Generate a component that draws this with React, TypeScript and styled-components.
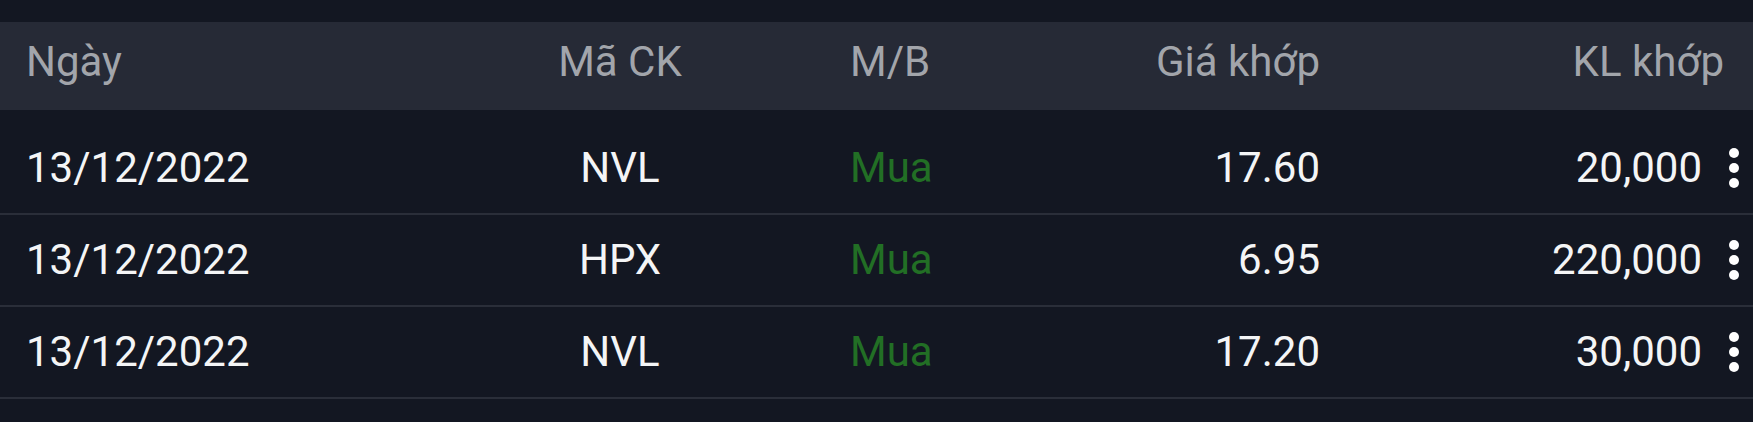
import React from 'react';
import styled, {createGlobalStyle} from 'styled-components';

interface Trade {
    date: string;
    code: string;
    side: string;
    price: string;
    volume: string;
}

const trades: Trade[] = [
    {date: '13/12/2022', code: 'NVL', side: 'Mua', price: '17.60', volume: '20,000'},
    {date: '13/12/2022', code: 'HPX', side: 'Mua', price: '6.95', volume: '220,000'},
    {date: '13/12/2022', code: 'NVL', side: 'Mua', price: '17.20', volume: '30,000'},
];

const MoreIcon: React.FC = () => (
    <svg width="10" height="40" viewBox="0 0 10 40">
        <circle cx="5" cy="5" r="5" fill="#ffffff" />
        <circle cx="5" cy="20" r="5" fill="#ffffff" />
        <circle cx="5" cy="35" r="5" fill="#ffffff" />
    </svg>
);

const App: React.FC = () => {
    return (
        <>
            <GlobalStyle />
            <Screen>
                <Header>
                    <HeadCell>Ngày</HeadCell>
                    <HeadCell align="center">Mã CK</HeadCell>
                    <HeadCell>M/B</HeadCell>
                    <HeadCell align="right">Giá khớp</HeadCell>
                    <HeadCell align="right">KL khớp</HeadCell>
                </Header>
                <List>
                    {trades.map((t, i) => (
                        <Row key={i}>
                            <Cell>{t.date}</Cell>
                            <Cell align="center">{t.code}</Cell>
                            <Cell buy={t.side === 'Mua'}>{t.side}</Cell>
                            <Cell align="right">{t.price}</Cell>
                            <Cell align="right">{t.volume}</Cell>
                            <MoreButton><MoreIcon /></MoreButton>
                        </Row>
                    ))}
                </List>
            </Screen>
        </>
    );
}

const GlobalStyle = createGlobalStyle`
    html, body {
        margin: 0;
        padding: 0;
        background: #131722;
    }
    body {
        font-family: Roboto, "Noto Sans", sans-serif;
    }
`;

const Screen = styled.div`
    width: 1753px;
    height: 422px;
    background: #131722;
    padding-top: 22px;
    box-sizing: border-box;
    overflow: hidden;
`;

const Header = styled.div`
    display: grid;
    grid-template-columns: 364px 460px 150px 320px 1fr;
    align-items: center;
    height: 88px;
    padding: 0 29px 9px 26px;
    box-sizing: border-box;
    background: #262a36;
`;

const HeadCell = styled.div<{align?: 'left' | 'center' | 'right'}>`
    text-align: ${props => props.align || 'left'};
    font-size: 42px;
    color: #a2a5ab;
    white-space: nowrap;
`;

const List = styled.div`
    padding-top: 13px;
`;

const Row = styled.div`
    display: grid;
    grid-template-columns: 364px 460px 150px 320px 1fr 51px;
    align-items: center;
    height: 92px;
    padding-left: 26px;
    border-bottom: 2px solid #2a2e39;
    box-sizing: border-box;
`;

const Cell = styled.div<{align?: 'left' | 'center' | 'right'; buy?: boolean}>`
    text-align: ${props => props.align || 'left'};
    font-size: 42px;
    line-height: 90px;
    color: ${props => props.buy ? '#226f25' : '#f4f5f6'};
    white-space: nowrap;
`;

const MoreButton = styled.div`
    display: flex;
    justify-content: flex-end;
    align-items: center;
    padding-right: 14px;
    height: 90px;
`;

export default App;
